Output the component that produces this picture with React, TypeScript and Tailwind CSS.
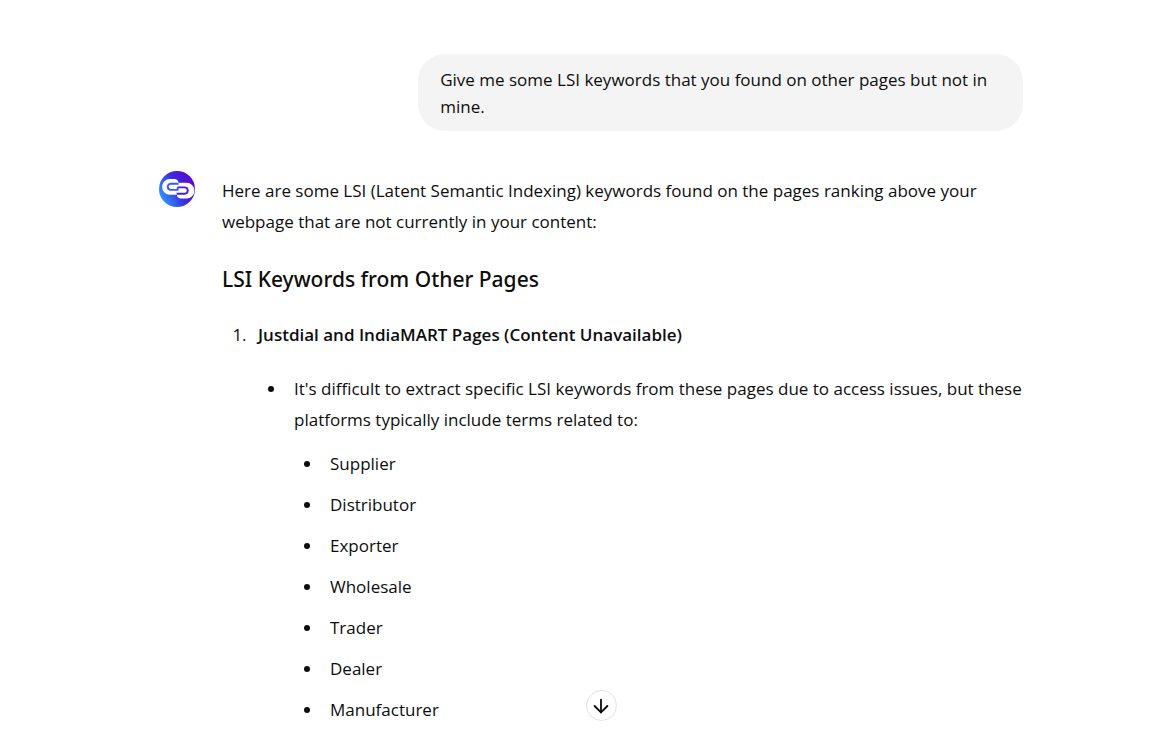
import { ArrowDown } from "lucide-react";

const keywords = ["Supplier", "Distributor", "Exporter", "Wholesale", "Trader", "Dealer", "Manufacturer"];

function Avatar() {
  return (
    <svg viewBox="0 0 36 36" className="size-9 shrink-0" role="img" aria-label="Assistant">
      <defs>
        <linearGradient id="avatar-fill" x1="0.1" y1="0.75" x2="0.95" y2="0.3">
          <stop offset="0" stopColor="#2f8dfc" />
          <stop offset="0.5" stopColor="#3a2fe0" />
          <stop offset="1" stopColor="#5a08cf" />
        </linearGradient>
      </defs>
      <circle cx="18" cy="18" r="18" fill="url(#avatar-fill)" />
      <path fill="#fff" d="M11 8H15.5Q19 8 19.6 11.8H27.5A7.9 7.9 0 0 1 27.5 27.6H22Q18.4 27.6 17.8 23.8H11A7.9 7.9 0 0 1 11 8Z" />
      <g fill="none" strokeWidth="1.9">
        <path stroke="#355ceb" d="M19.5 12.8H11.8A3 3 0 0 0 11.8 18.9H18.6V16.4" />
        <path stroke="#4322da" d="M18.4 16.4H25.6A3.1 3.1 0 0 1 25.6 22.7H17.6" />
      </g>
    </svg>
  );
}

export default function App() {
  return (
    <div className="relative h-screen overflow-hidden bg-white font-['Open_Sans','Noto_Sans',sans-serif] text-[17px] text-[#0d0d0d]">
      <main className="pl-2">
        <div className="mx-auto w-full max-w-[864px] pt-[54px]">
          <div className="flex justify-end">
            <p className="max-w-[70%] rounded-[27px] bg-[#f4f4f4] px-[22px] pt-3 pb-[11px] leading-[27px]">
              Give me some LSI keywords that you found on other pages but not in mine.
            </p>
          </div>
          <article className="mt-10 flex gap-[27px]">
            <Avatar />
            <div className="min-w-0 flex-1 pt-1 leading-[31px]">
              <p>
                Here are some LSI (Latent Semantic Indexing) keywords found on the pages ranking above your webpage that
                are not currently in your content:
              </p>
              <h3 className="mt-[27px] font-['Noto_Sans','Open_Sans',sans-serif] text-[21px] font-medium">
                LSI Keywords from Other Pages
              </h3>
              <ol className="mt-6 list-decimal pl-[29px]">
                <li className="pl-[7px]">
                  <p className="font-semibold">Justdial and IndiaMART Pages (Content Unavailable)</p>
                  <ul className="mt-[23px] list-disc pl-[29px]">
                    <li className="pl-[7px]">
                      <p>
                        It's difficult to extract specific LSI keywords from these pages due to access issues, but these
                        platforms typically include terms related to:
                      </p>
                      <ul className="mt-[13px] flex list-disc flex-col gap-[10px] pl-[29px]">
                        {keywords.map((word) => (
                          <li key={word} className="pl-[7px]">
                            {word}
                          </li>
                        ))}
                      </ul>
                    </li>
                  </ul>
                </li>
              </ol>
            </div>
          </article>
        </div>
      </main>
      <div className="absolute inset-x-0 bottom-[10px] flex justify-center pl-7">
        <button
          type="button"
          aria-label="Scroll to bottom"
          className="flex size-[31px] items-center justify-center rounded-full border border-[#e3e3e3] bg-white"
        >
          <ArrowDown size={22} strokeWidth={2} />
        </button>
      </div>
    </div>
  );
}
